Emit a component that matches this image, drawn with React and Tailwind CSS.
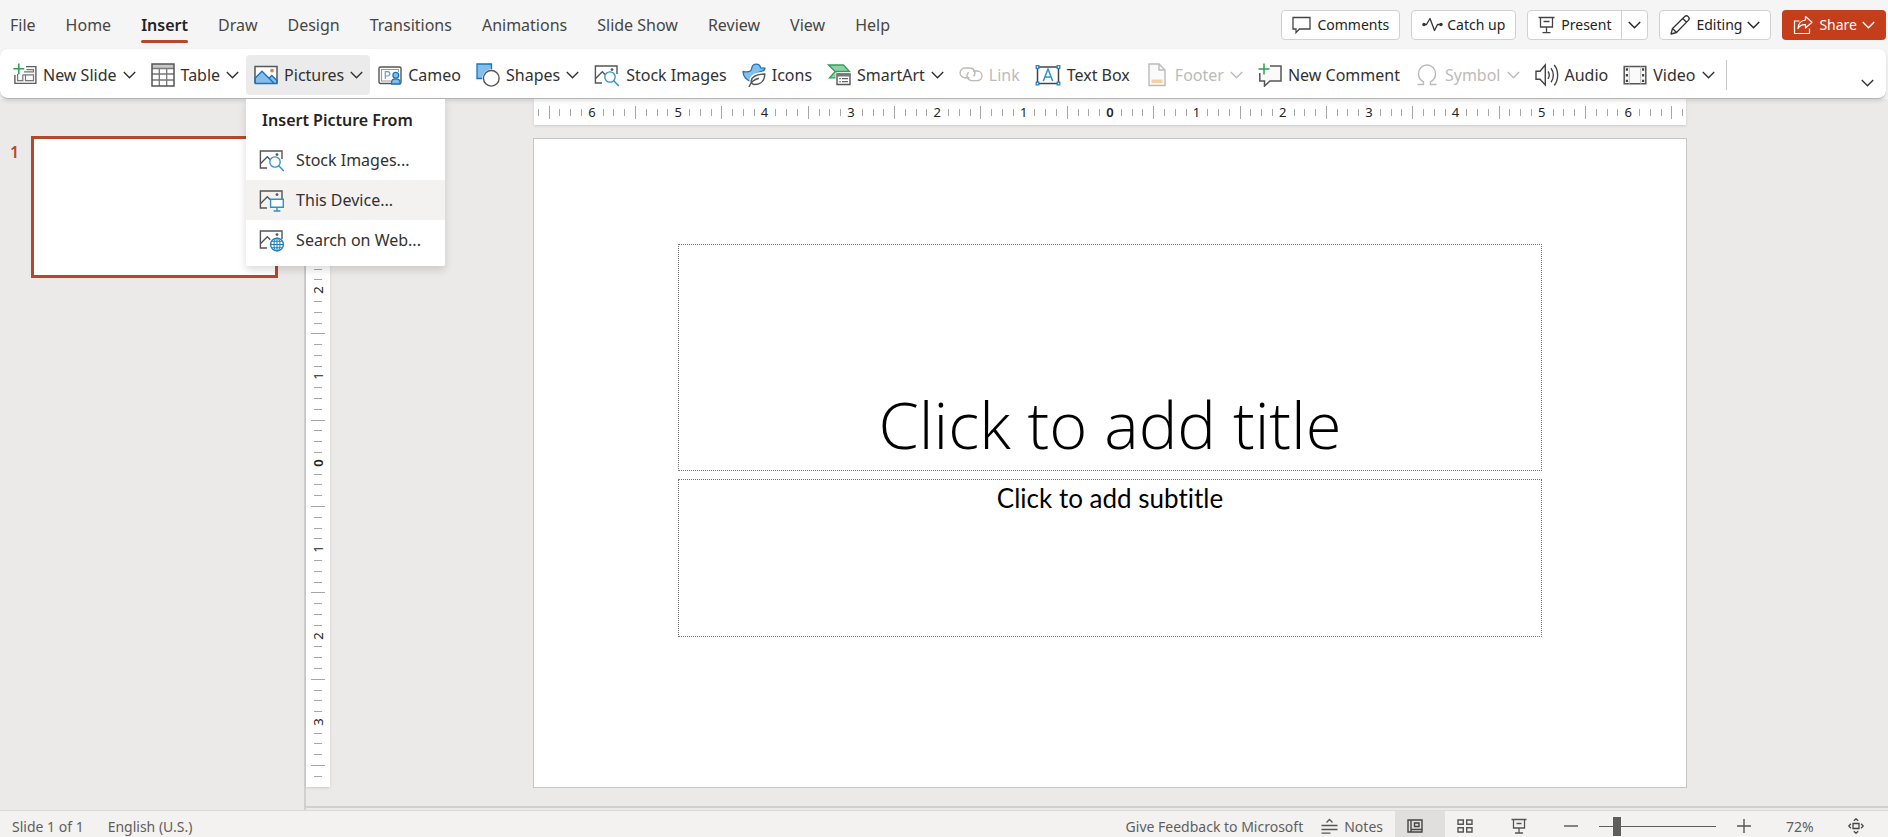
import { useState } from 'react';

const tabs = [
  'File', 'Home', 'Insert', 'Draw', 'Design', 'Transitions',
  'Animations', 'Slide Show', 'Review', 'View', 'Help',
];

function Svg({ w = 24, h = 24, children }) {
  return (
    <svg width={w} height={h} viewBox={`0 0 ${w} ${h}`} fill="none" className="shrink-0" aria-hidden="true">
      {children}
    </svg>
  );
}

function Chevron() {
  return (
    <Svg w={13} h={8}>
      <path d="M.8 1 6.500 6.700 12.200 1" stroke="currentColor" strokeWidth="1.400" />
    </Svg>
  );
}

function NewSlideIcon() {
  return (
    <Svg>
      <path d="M13 3.600h9.900v16.800H1.900V12" fill="#fafafa" stroke="#5f5f5f" strokeWidth="1.400" />
      <path d="M13.500 6.600h7v2.200H11M20.500 11.800h-8v5.900h8zM9.800 11.800v5.900H4.600V11M9.800 11.800h2.700" stroke="#777" strokeWidth="1.200" />
      <path d="M5.800.4v10.800M.4 5.800h10.800" stroke="#2f9e4f" strokeWidth="1.500" />
    </Svg>
  );
}

function TableIcon() {
  return (
    <Svg>
      <path d="M1 1h22v22H1z" fill="#fff" />
      <path d="M1 1h22v4H1z" fill="#c8c8c8" />
      <path d="M1 5.500h22M1 11h22M1 17h22M8.300 5.500V23M15.700 5.500V23" stroke="#777" strokeWidth="1.300" />
      <path d="M1 1h22v22H1z" stroke="#555" strokeWidth="1.500" />
    </Svg>
  );
}

function PicturesIcon() {
  return (
    <Svg>
      <path d="M1 3.500h22v17H1z" fill="#fff" />
      <path d="M1.200 15 8 8.300l7.200 7 2.600-2.600 5 4.900v2.700H1.200z" fill="#83beec" />
      <path d="M1 20.500v-17h22v17" stroke="#555" strokeWidth="1.500" />
      <path d="M1.200 20.500V15L8 8.300l12 12M14.800 15.600l3-3 5.100 5v2.900H1" stroke="#1e73b8" strokeWidth="1.400" />
      <circle cx="18" cy="7.600" r="1.900" fill="#d98a45" />
    </Svg>
  );
}

function CameoIcon() {
  return (
    <Svg>
      <rect x="1" y="4" width="22" height="16.500" rx="1.500" fill="#fff" stroke="#555" strokeWidth="1.400" />
      <path d="M13 18H3.500V6.500h17V9" stroke="#999" strokeWidth="1.100" />
      <path d="M7.300 16V8.700h2.400a2.100 2.100 0 0 1 0 4.300H7.300" stroke="#5aa6e0" strokeWidth="1.200" />
      <circle cx="17.800" cy="12.200" r="2.900" fill="#83beec" stroke="#1e73b8" strokeWidth="1.300" />
      <path d="M13.600 21v-2c0-2 1.500-3.200 4.200-3.200s4.200 1.200 4.200 3.200v2z" fill="#83beec" stroke="#1e73b8" strokeWidth="1.300" />
    </Svg>
  );
}

function ShapesIcon() {
  return (
    <Svg>
      <path d="M1 1h14.500v14.500H1z" fill="#83beec" stroke="#1e73b8" strokeWidth="1.300" />
      <circle cx="15.300" cy="15.300" r="9" fill="#fff" />
      <circle cx="15.300" cy="15.300" r="7.800" fill="#fff" stroke="#555" strokeWidth="1.400" />
    </Svg>
  );
}

// picture outline shared by the stock / device / web variants
function PictureFrame() {
  return (
    <>
      <path d="M23 11V3H1.400v17H8" stroke="#555" strokeWidth="1.400" />
      <path d="m1.400 15.800 6.900-7 3 2.900" stroke="#555" strokeWidth="1.400" />
      <circle cx="18" cy="6.600" r="1.400" fill="#555" />
    </>
  );
}

function StockImagesIcon() {
  return (
    <Svg w={26}>
      <PictureFrame />
      <circle cx="16" cy="14" r="5.200" stroke="#2b93c9" strokeWidth="1.300" fill="#fff" />
      <path d="m19.800 17.800 5 5.200" stroke="#2b93c9" strokeWidth="1.400" />
    </Svg>
  );
}

function DeviceIcon() {
  return (
    <Svg w={26}>
      <PictureFrame />
      <path d="M11.600 11.300h12.700v8H11.600z" fill="#fff" stroke="#2b93c9" strokeWidth="1.400" />
      <path d="M18 19.500v3.200M14.600 23h6.800" stroke="#2b93c9" strokeWidth="1.400" />
    </Svg>
  );
}

function WebIcon() {
  return (
    <Svg w={26}>
      <PictureFrame />
      <circle cx="18" cy="16.500" r="6.400" fill="#fff" stroke="#2180b8" strokeWidth="1.400" />
      <path d="M18 10v13M11.600 16.500h12.800M12.800 13.200h10.400M12.800 19.800h10.400" stroke="#2180b8" strokeWidth="1.100" />
      <ellipse cx="18" cy="16.500" rx="3" ry="6.400" stroke="#2180b8" strokeWidth="1.100" />
    </Svg>
  );
}

function IconsIcon() {
  return (
    <Svg>
      <path d="M1 8.300c2.600.8 5 .8 7.300-.2C9.400 7.600 9.600 6 9.900 4.500c1.100-4.500 7.700-4.500 8.700.3l4.400.3c-.3 2-1.800 3-3.800 3.200-4.200 1.200-8.400 4-9.200 10C4.500 18 1 13.500 1 8.300z" fill="#83beec" stroke="#1e73b8" strokeWidth="1.300" strokeLinejoin="round" />
      <path d="M22.800 10.500c-7.800.2-13.200 2.300-13.600 7.200-.1 1.600.7 3.800 3.600 3.800 5.800 0 10-4 10-11z" fill="#fff" stroke="#fff" strokeWidth="3.500" />
      <path d="M22.800 11c-8 .3-13 2.500-13.600 6.900-.3 2.200 1.300 3.600 3.600 3.600 5.800 0 9.800-3.700 10-10.500z" fill="#fff" stroke="#555" strokeWidth="1.400" />
      <path d="M7 24c1.500-4.500 5-7.500 10-8.700" stroke="#555" strokeWidth="1.400" />
    </Svg>
  );
}

function SmartArtIcon() {
  return (
    <Svg>
      <path d="M1.500 2h15l6 6.500H9.500v6.300h-7l5.700-6.300z" fill="#8fd0a5" stroke="#2f9e5a" strokeWidth="1.300" />
      <path d="M8.500 9.500h16V24h-16z" fill="#fff" />
      <path d="M10 11h13v10.500H10z" fill="#fff" stroke="#555" strokeWidth="1.400" />
      <path d="M10 11h13v2.500H10z" fill="#777" />
      <path d="M12.300 15.700h1.400M15 15.700h6M12.300 18.700h1.400M15 18.700h6" stroke="#666" strokeWidth="1.200" />
    </Svg>
  );
}

function LinkIcon() {
  return (
    <Svg>
      <path d="M10.500 14.800H6a4.900 4.900 0 1 1 0-9.800h5a4.900 4.900 0 0 1 3.500 8.300" stroke="currentColor" strokeWidth="1.400" />
      <path d="M14 8h4.200a4.800 4.800 0 1 1 0 9.600h-5.400a4.800 4.800 0 0 1-3.200-8.300" stroke="currentColor" strokeWidth="1.400" />
    </Svg>
  );
}

function TextBoxIcon() {
  return (
    <Svg w={26}>
      <path d="M2.500 4h21v16.500h-21z" fill="#fff" stroke="#444" strokeWidth="1.500" />
      <path d="m8.300 18 4.700-12 4.700 12M9.900 14h6.200" stroke="#2b93c9" strokeWidth="1.500" />
      <path d="M1.200 2.700h2.600v2.600H1.200zM22.200 2.700h2.600v2.600h-2.600zM1.200 19.200h2.600v2.600H1.200zM22.200 19.200h2.600v2.600h-2.600z" fill="#fff" stroke="#2b82bd" strokeWidth="1.300" />
    </Svg>
  );
}

function FooterIcon() {
  return (
    <Svg>
      <path d="M4 1h10l6 6v15.500H4z" fill="#fafafa" stroke="currentColor" strokeWidth="1.400" />
      <path d="M14 1v6h6" stroke="currentColor" strokeWidth="1.400" />
      <path d="M6.500 16.500h11v3.500h-11z" fill="#f6cfa6" />
    </Svg>
  );
}

function NewCommentIcon() {
  return (
    <Svg>
      <path d="M12 3h11v15H12l-5.500 5v-5H1.800v-8" fill="#fafafa" stroke="#555" strokeWidth="1.500" />
      <path d="M6 .5v11M.5 6h11" stroke="#2f9e4f" strokeWidth="1.500" />
    </Svg>
  );
}

function SymbolIcon() {
  return (
    <Svg>
      <path d="M2.500 21.500h6v-2.700C5.300 17.300 3.500 14.500 3.500 10.800 3.500 5.700 7.300 2 12 2s8.500 3.700 8.500 8.800c0 3.700-1.800 6.500-5 8v2.700h6" stroke="currentColor" strokeWidth="1.400" />
    </Svg>
  );
}

function AudioIcon() {
  return (
    <Svg>
      <path d="M1 8.300h4L10.300 2v20L5 16.200H1z" stroke="#444" strokeWidth="1.400" />
      <path d="M13 8.300c1.500 2.200 1.500 5.300 0 7.700M16 5.200c3.100 3.900 3.100 10 0 14M19.200 2c4.600 5.600 4.600 14.700 0 20.400" stroke="#444" strokeWidth="1.400" />
    </Svg>
  );
}

function VideoIcon() {
  return (
    <Svg>
      <path d="M1.200 3.500h21.600v17.300H1.200z" fill="#fafafa" stroke="#555" strokeWidth="1.500" />
      <path d="M6.300 3.500v17.300M17.700 3.500v17.300" stroke="#bbb" strokeWidth="1" />
      <path d="M3.900 5.300v14M20.100 5.300v14" stroke="#444" strokeWidth="2.200" strokeDasharray="2.400 3.300" />
    </Svg>
  );
}

const tools = [
  { name: 'New Slide', Icon: NewSlideIcon, menu: true },
  { name: 'Table', Icon: TableIcon, menu: true },
  { name: 'Pictures', Icon: PicturesIcon, menu: true },
  { name: 'Cameo', Icon: CameoIcon },
  { name: 'Shapes', Icon: ShapesIcon, menu: true },
  { name: 'Stock Images', Icon: StockImagesIcon },
  { name: 'Icons', Icon: IconsIcon },
  { name: 'SmartArt', Icon: SmartArtIcon, menu: true },
  { name: 'Link', Icon: LinkIcon, disabled: true },
  { name: 'Text Box', Icon: TextBoxIcon },
  { name: 'Footer', Icon: FooterIcon, menu: true, disabled: true },
  { name: 'New Comment', Icon: NewCommentIcon },
  { name: 'Symbol', Icon: SymbolIcon, menu: true, disabled: true },
  { name: 'Audio', Icon: AudioIcon },
  { name: 'Video', Icon: VideoIcon, menu: true },
];

const pictureSources = [
  { name: 'Stock Images...', Icon: StockImagesIcon },
  { name: 'This Device...', Icon: DeviceIcon, active: true },
  { name: 'Search on Web...', Icon: WebIcon },
];

function PicturesMenu() {
  return (
    <div className="absolute top-full left-0 mt-1 w-[199px] rounded-b-xs bg-white pt-px pb-1.5 shadow-[0_4px_8px_rgba(0,0,0,0.14)]">
      <h2 className="h-10 px-4 leading-10 font-semibold whitespace-nowrap text-[#252423]">Insert Picture From</h2>
      {pictureSources.map(({ name, Icon, active }) => (
        <button
          key={name}
          className={`flex h-10 w-full items-center gap-[11px] pl-[13px] whitespace-nowrap text-[#323130] ${active ? 'bg-[#f3f2f1]' : ''}`}
        >
          <Icon />
          {name}
        </button>
      ))}
    </div>
  );
}

function TopActions() {
  const box = 'flex h-[30px] items-center rounded-[4px] border border-[#d1d1d1] bg-white text-[14px] text-[#242424]';
  return (
    <div className="flex items-center gap-[11px] pr-0.5 whitespace-nowrap">
      <button className={`${box} gap-1.5 px-2.5`}>
        <Svg w={19} h={18}>
          <path d="M1 1.500h17v11.500H7.500L4 16.600V13H1z" stroke="#444" strokeWidth="1.300" />
        </Svg>
        Comments
      </button>
      <button className={`${box} gap-1 px-2.5`}>
        <Svg w={21} h={18}>
          <path d="M2 8.500h2.500L8 2.500l4.500 12 3-6H19" stroke="#333" strokeWidth="1.300" strokeLinejoin="round" />
          <circle cx="2" cy="8.500" r="1.700" fill="#333" />
          <circle cx="19" cy="8.500" r="1.700" fill="#333" />
        </Svg>
        Catch up
      </button>
      <div className={box}>
        <button className="flex h-full items-center gap-1.5 px-2.5">
          <Svg w={17} h={18}>
            <path d="M.5 1.500h16M2.500 1.500v9.500h12V1.500M5.500 5.500h6M8.500 11v5.500M4.500 16.600h8" stroke="#444" strokeWidth="1.300" />
          </Svg>
          Present
        </button>
        <button aria-label="Present options" className="flex h-full w-[26px] items-center justify-center border-l border-[#d1d1d1]">
          <Chevron />
        </button>
      </div>
      <button className={`${box} gap-[5px] px-2.5`}>
        <Svg w={21} h={20}>
          <path d="m1 19 1.500-5.500L14.500 1.700a2.400 2.400 0 0 1 3.800 3.700L6.500 17.500zM12.800 3.500l3.800 3.700M2.500 13.500l4 4" stroke="#333" strokeWidth="1.300" strokeLinejoin="round" />
        </Svg>
        Editing
        <Chevron />
      </button>
      <button className="flex h-[30px] items-center gap-[5px] rounded-[4px] bg-[#c43e1c] px-[11px] text-[14px] text-white">
        <Svg w={21} h={20}>
          <path d="M6.500 6H1.500v12.500h15V13.500" stroke="#fff" strokeWidth="1.200" />
          <path d="M12.500 1.500 19 7.300l-6.500 5.700V9.700c-3.500-.2-5.800.8-7.500 3.800.2-4.800 3-8 7.500-8.500z" stroke="#fff" strokeWidth="1.200" strokeLinejoin="round" />
        </Svg>
        Share
        <Chevron />
      </button>
    </div>
  );
}

// ticks every 1/8 inch, a number on each inch, counted from the middle
function Ruler({ inches, vertical }) {
  const eighths = inches * 8;
  const last = Math.ceil(eighths / 2) - 1;
  const ticks = Array.from({ length: last * 2 + 1 }, (_, i) => i - last);

  return (
    <div
      className={`relative overflow-hidden bg-white text-[13px] leading-4 text-[#252423] ${vertical ? 'h-full w-6' : 'h-[26px] w-full'}`}
    >
      {ticks.map((k) => {
        const at = `${50 + (k / eighths) * 100}%`;
        const style = vertical ? { top: at } : { left: at };
        if (k % 8 === 0) {
          return (
            <span
              key={k}
              style={style}
              className={`absolute -translate-x-1/2 -translate-y-1/2 ${vertical ? 'left-1/2 -rotate-90' : 'top-1/2'} ${k === 0 ? 'font-semibold' : ''}`}
            >
              {Math.abs(k) / 8}
            </span>
          );
        }
        const long = Math.abs(k) % 8 === 4;
        let size = long ? 'top-[7px] h-[13px] w-px' : 'top-2.5 h-[7px] w-px';
        if (vertical) size = long ? 'left-[5px] h-px w-3.5' : 'left-2 h-px w-2';
        return <i key={k} style={style} className={`absolute bg-[#a6a6a6] ${size}`} />;
      })}
    </div>
  );
}

function StatusBar() {
  const [zoom, setZoom] = useState(72);

  return (
    <footer className="flex h-[27px] shrink-0 items-stretch overflow-hidden border-t border-[#dcdad8] bg-[#f3f2f1] text-[14px] whitespace-nowrap text-[#605e5c]">
      <div className="flex items-center gap-6 pt-1 pl-3">
        <button>Slide 1 of 1</button>
        <button>English (U.S.)</button>
      </div>
      <div className="ml-auto flex items-stretch pt-1">
        <button className="mr-[18px]">Give Feedback to Microsoft</button>
        <button className="mr-3 flex items-center gap-1.5">
          <Svg w={17} h={16}>
            <path d="M.5 7.500h16M.5 11.500h16M.5 15.200h9M5.500 4.500l3-3 3 3" stroke="#555" strokeWidth="1.300" />
          </Svg>
          Notes
        </button>
        <button aria-label="Normal view" className="-mt-1 flex w-[50px] items-center bg-[#e1dfdd] pt-1 pl-3">
          <Svg w={16} h={14}>
            <path d="M1 1h14v12H1zM4 1v12M4 10.500h11" stroke="#444" strokeWidth="1.400" />
            <path d="M7.500 4h4.500v3.500H7.500z" stroke="#444" strokeWidth="1.400" />
          </Svg>
        </button>
        <button aria-label="Slide sorter" className="flex w-[54px] items-center pl-3">
          <Svg w={16} h={14}>
            <path d="M1 1h5.300v4.300H1zM9.700 1H15v4.300H9.700zM1 8.700h5.300V13H1zM9.700 8.700H15V13H9.700z" stroke="#555" strokeWidth="1.400" />
          </Svg>
        </button>
        <button aria-label="Slide show" className="flex w-16 items-center pl-3">
          <Svg w={16} h={16}>
            <path d="M.5 1.500h15M2.500 1.500v8.500h11V1.500M5.500 5.500h5M8 10v5M4 15h8" stroke="#555" strokeWidth="1.300" />
          </Svg>
        </button>
        <button aria-label="Zoom out" className="flex w-9 items-center" onClick={() => setZoom(zoom - 10)}>
          <Svg w={16} h={16}>
            <path d="M1 8h14" stroke="#555" strokeWidth="1.400" />
          </Svg>
        </button>
        <input
          type="range"
          aria-label="Zoom"
          min="25"
          max="400"
          value={zoom}
          onChange={(e) => setZoom(Number(e.target.value))}
          className="w-[117px] appearance-none bg-transparent [&::-webkit-slider-runnable-track]:h-px [&::-webkit-slider-runnable-track]:bg-[#605e5c] [&::-webkit-slider-thumb]:-mt-[9px] [&::-webkit-slider-thumb]:h-[19px] [&::-webkit-slider-thumb]:w-2 [&::-webkit-slider-thumb]:appearance-none [&::-webkit-slider-thumb]:bg-[#605e5c]"
        />
        <button aria-label="Zoom in" className="flex w-[70px] items-center pl-5" onClick={() => setZoom(zoom + 10)}>
          <Svg w={16} h={16}>
            <path d="M1 8h14M8 1v14" stroke="#555" strokeWidth="1.400" />
          </Svg>
        </button>
        <button className="w-[62px] text-left">{zoom}%</button>
        <button aria-label="Fit to window" className="mr-6 flex items-center">
          <Svg w={16} h={16}>
            <path d="M5 5.500h6v5H5zM5.800 2.800 8 .8l2.200 2M5.800 13.200l2.200 2 2.200-2M2.800 5.800.8 8l2 2.200M13.200 5.800l2 2.200-2 2.200" stroke="#444" strokeWidth="1.300" />
          </Svg>
        </button>
      </div>
    </footer>
  );
}

function App() {
  const [tab, setTab] = useState('Insert');

  return (
    <div className="flex h-screen flex-col overflow-hidden bg-[#f5f5f5] font-['Noto_Sans',sans-serif] text-[16px] text-[#323130]">
      <header className="flex h-[49px] shrink-0 items-center justify-between">
        <nav className="flex gap-[30px] pl-2.5 whitespace-nowrap">
          {tabs.map((name) => (
            <button
              key={name}
              onClick={() => setTab(name)}
              className={`relative h-9 leading-9 ${tab === name ? 'font-semibold text-[#252423]' : 'text-[#484644]'}`}
            >
              {name}
              {tab === name && <span className="absolute inset-x-0 bottom-0 h-[3px] rounded-full bg-[#b7472a]" />}
            </button>
          ))}
        </nav>
        <TopActions />
      </header>

      {/* Ribbon */}
      <div className="relative z-10 mr-0.5 flex h-[50px] shrink-0 items-center rounded-lg border-b border-[#b5b5b5] bg-white pt-0.5 pl-[5px] shadow-[0_2px_4px_rgba(0,0,0,0.12)]">
        {tools.map(({ name, Icon, menu, disabled }) => (
          <div key={name} className="relative">
            <button
              disabled={disabled}
              className={`flex h-10 items-center gap-1.5 rounded-[4px] pr-[7px] pl-2 whitespace-nowrap ${name === 'Pictures' ? 'bg-[#ebebeb]' : ''} ${disabled ? 'text-[#bdbbb9]' : ''}`}
            >
              <Icon />
              {name}
              {menu && <Chevron />}
            </button>
            {name === 'Pictures' && <PicturesMenu />}
          </div>
        ))}
        <div className="ml-1 h-[30px] w-px bg-[#c8c6c4]" />
        <button aria-label="Ribbon options" className="mt-4 mr-3 ml-auto">
          <Chevron />
        </button>
      </div>

      {/* Workspace */}
      <div className="flex min-h-0 flex-1 bg-[#ebeae8]">
        <aside className="flex w-[306px] shrink-0 items-start border-r-2 border-[#d0d0d0] pt-[37px] pl-2.5">
          <span className="mt-1 w-[21px] font-semibold text-[#b7472a]">1</span>
          <div className="aspect-[247/142] w-[247px] border-[3px] border-[#b7472a] bg-white" />
        </aside>

        <main className="mb-0.5 grid min-w-0 flex-1 grid-cols-[26px_1fr] content-start border-b-2 border-[#d0d0d0]">
          <div />
          <div className="mx-auto w-[74%] shadow-sm">
            <Ruler inches={40 / 3} />
          </div>
          <div className="mt-3.5 mb-px w-6 shadow-sm">
            <Ruler inches={7.5} vertical />
          </div>
          <section className="mx-auto mt-[13px] box-content grid aspect-video w-[74%] grid-rows-[105fr_227fr_8fr_158fr_150fr] border border-[#c8c6c4] bg-white text-black">
            <div className="row-start-2 mx-[12.5%] flex items-end justify-center border border-dotted border-[#777]">
              <h1 className="font-['Open_Sans',sans-serif] text-[65px] leading-[92px] font-light">Click to add title</h1>
            </div>
            <div className="row-start-4 mx-[12.5%] border border-dotted border-[#777] text-center">
              <p className="font-['Lato',sans-serif] text-[26px] leading-9 [font-variant-ligatures:none]">Click to add subtitle</p>
            </div>
          </section>
        </main>
      </div>

      <StatusBar />
    </div>
  );
}

export default App;
